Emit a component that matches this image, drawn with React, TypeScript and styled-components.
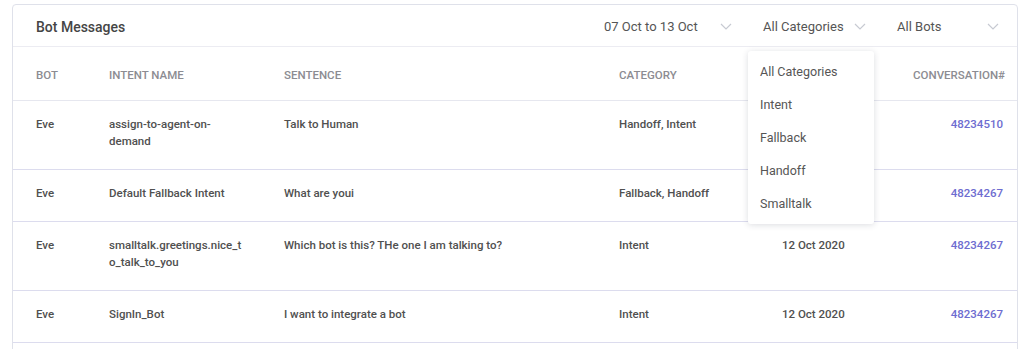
import React from 'react';
import styled, { createGlobalStyle } from 'styled-components';

const GlobalStyle = createGlobalStyle`
  body {
    margin: 0;
    background: #fff;
    font-family: Roboto, 'Liberation Sans', Arial, sans-serif;
  }
`;

const Page = styled.div`
  padding: 4px 6px 0 12px;
`;

const Card = styled.div`
  border: 1px solid #dfe1ea;
  border-radius: 4px;
  background: #fff;
`;

const Toolbar = styled.div`
  display: flex;
  align-items: center;
  height: 42px;
  padding: 2px 18px 0 23px;
  box-sizing: border-box;
  border-bottom: 1px solid #ececf2;
`;

const Title = styled.h2`
  flex: 1;
  margin: 0;
  font-size: 14px;
  font-weight: 500;
  color: #454545;
`;

const Filters = styled.div`
  display: flex;
  align-items: center;
  gap: 31px;
`;

const Select = styled.div<{ $width: number }>`
  position: relative;
  display: flex;
  align-items: center;
  justify-content: space-between;
  width: ${p => p.$width}px;
  font-size: 13px;
  color: #555;
`;

const Menu = styled.div`
  position: absolute;
  top: 32px;
  left: -15px;
  width: 126px;
  padding: 4px 0;
  background: #fff;
  border-radius: 3px;
  box-shadow: 0 1px 6px rgba(40, 44, 70, 0.16);
  z-index: 5;
`;

const MenuItem = styled.div`
  height: 33px;
  line-height: 33px;
  padding-left: 12px;
  font-size: 12.5px;
  color: #555;
`;

const Row = styled.div<{ $head?: boolean }>`
  display: grid;
  grid-template-columns: 73px 175px 335px 163px 1fr auto;
  align-items: start;
  padding: ${p => (p.$head ? '20px 12px 16px 23px' : '15px 14px 19px 23px')};
  border-bottom: 1px solid ${p => (p.$head ? '#e6e7ef' : '#dcdcee')};
  line-height: 17px;
  font-size: 11.5px;
  font-weight: 500;
  color: ${p => (p.$head ? '#8c8c92' : '#505050')};
  text-transform: ${p => (p.$head ? 'uppercase' : 'none')};
`;

const Cell = styled.div<{ $wrap?: boolean; $right?: boolean }>`
  max-width: ${p => (p.$wrap ? '138px' : 'none')};
  overflow-wrap: anywhere;
  text-align: ${p => (p.$right ? 'right' : 'left')};
`;

const Link = styled.a`
  color: #6e6dd0;
  text-decoration: none;
`;

const Chevron = () => (
  <svg width="12" height="7" viewBox="0 0 12 7">
    <polyline points="1,1 6,6 11,1" fill="none" stroke="#c7cad2" strokeWidth="1.2" />
  </svg>
);

const rows = [
  { bot: 'Eve', intent: 'assign-to-agent-on-demand', sentence: 'Talk to Human', category: 'Handoff, Intent', date: '12 Oct 2020', conv: '48234510' },
  { bot: 'Eve', intent: 'Default Fallback Intent', sentence: 'What are youi', category: 'Fallback, Handoff', date: '12 Oct 2020', conv: '48234267' },
  { bot: 'Eve', intent: 'smalltalk.greetings.nice_to_talk_to_you', sentence: 'Which bot is this? THe one I am talking to?', category: 'Intent', date: '12 Oct 2020', conv: '48234267' },
  { bot: 'Eve', intent: 'SignIn_Bot', sentence: 'I want to integrate a bot', category: 'Intent', date: '12 Oct 2020', conv: '48234267' },
  { bot: 'Eve', intent: 'Default Welcome Intent', sentence: 'Hi', category: 'Intent', date: '12 Oct 2020', conv: '48234198' },
];

const categories = ['All Categories', 'Intent', 'Fallback', 'Handoff', 'Smalltalk'];

export default function App() {
  return (
    <Page>
      <GlobalStyle />
      <Card>
        <Toolbar>
          <Title>Bot Messages</Title>
          <Filters>
            <Select $width={128}>
              <span>07 Oct to 13 Oct</span>
              <Chevron />
            </Select>
            <Select $width={103}>
              <span>All Categories</span>
              <Chevron />
              <Menu>
                {categories.map(c => (
                  <MenuItem key={c}>{c}</MenuItem>
                ))}
              </Menu>
            </Select>
            <Select $width={102}>
              <span>All Bots</span>
              <Chevron />
            </Select>
          </Filters>
        </Toolbar>
        <Row $head>
          <Cell>Bot</Cell>
          <Cell>Intent Name</Cell>
          <Cell>Sentence</Cell>
          <Cell>Category</Cell>
          <Cell>Date</Cell>
          <Cell $right>Conversation#</Cell>
        </Row>
        {rows.map((r, i) => (
          <Row key={i}>
            <Cell>{r.bot}</Cell>
            <Cell $wrap>{r.intent}</Cell>
            <Cell>{r.sentence}</Cell>
            <Cell>{r.category}</Cell>
            <Cell>{r.date}</Cell>
            <Cell $right>
              <Link href="#">{r.conv}</Link>
            </Cell>
          </Row>
        ))}
      </Card>
    </Page>
  );
}
